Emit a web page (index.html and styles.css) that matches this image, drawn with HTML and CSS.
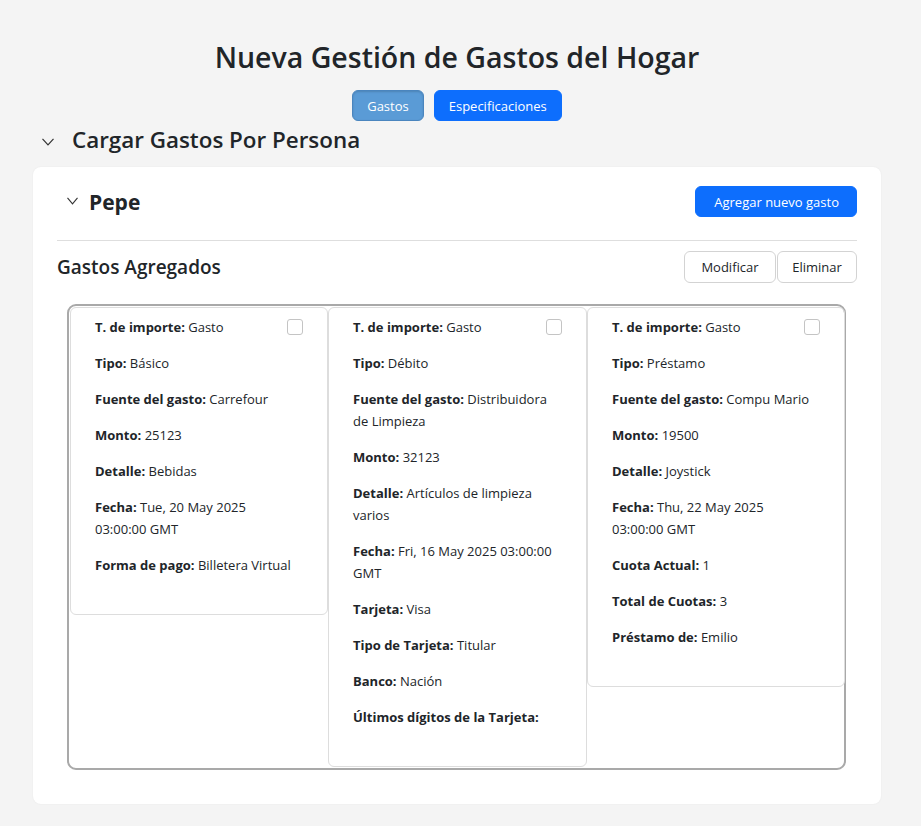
FILE: index.html
```html
<!DOCTYPE html>
<html lang="es">
<head>
<meta charset="utf-8">
<title>Nueva Gestión de Gastos del Hogar</title>
<link rel="stylesheet" href="styles.css">
</head>
<body>
<div class="page">
  <h1 class="title">Nueva Gestión de Gastos del Hogar</h1>
  <nav class="tabs">
    <button class="btn btn-tab active">Gastos</button>
    <button class="btn btn-tab">Especificaciones</button>
  </nav>
  <div class="section-head">
    <svg class="chev chev-lg" viewBox="0 0 12 8" width="12" height="8"><polyline points="0.5,0.8 6,6.8 11.5,0.8" fill="none" stroke="#333" stroke-width="1.2"/></svg>
    <h2 class="section-title">Cargar Gastos Por Persona</h2>
  </div>
  <section class="panel">
    <div class="person-row">
      <div class="person-name">
        <svg class="chev chev-sm" viewBox="0 0 11 8" width="11" height="8"><polyline points="0.5,0.8 5.5,6.8 10.5,0.8" fill="none" stroke="#333" stroke-width="1.1"/></svg>
        <h3 class="person-title">Pepe</h3>
      </div>
      <button class="btn btn-primary">Agregar nuevo gasto</button>
    </div>
    <hr class="divider">
    <div class="list-head">
      <h4 class="list-title">Gastos Agregados</h4>
      <div class="actions">
        <button class="btn btn-light btn-mod">Modificar</button>
        <button class="btn btn-light btn-del">Eliminar</button>
      </div>
    </div>
    <div class="grid">
      <article class="card">
        <div class="row-first"><p><b>T. de importe:</b> Gasto</p><span class="check"></span></div>
        <p><b>Tipo:</b> Básico</p>
        <p><b>Fuente del gasto:</b> Carrefour</p>
        <p><b>Monto:</b> 25123</p>
        <p><b>Detalle:</b> Bebidas</p>
        <p><b>Fecha:</b> Tue, 20 May 2025 03:00:00 GMT</p>
        <p><b>Forma de pago:</b> Billetera Virtual</p>
      </article>
      <article class="card">
        <div class="row-first"><p><b>T. de importe:</b> Gasto</p><span class="check"></span></div>
        <p><b>Tipo:</b> Débito</p>
        <p><b>Fuente del gasto:</b> Distribuidora de Limpieza</p>
        <p><b>Monto:</b> 32123</p>
        <p><b>Detalle:</b> Artículos de limpieza varios</p>
        <p><b>Fecha:</b> Fri, 16 May 2025 03:00:00 GMT</p>
        <p><b>Tarjeta:</b> Visa</p>
        <p><b>Tipo de Tarjeta:</b> Titular</p>
        <p><b>Banco:</b> Nación</p>
        <p><b>Últimos dígitos de la Tarjeta:</b></p>
      </article>
      <article class="card">
        <div class="row-first"><p><b>T. de importe:</b> Gasto</p><span class="check"></span></div>
        <p><b>Tipo:</b> Préstamo</p>
        <p><b>Fuente del gasto:</b> Compu Mario</p>
        <p><b>Monto:</b> 19500</p>
        <p><b>Detalle:</b> Joystick</p>
        <p><b>Fecha:</b> Thu, 22 May 2025 03:00:00 GMT</p>
        <p><b>Cuota Actual:</b> 1</p>
        <p><b>Total de Cuotas:</b> 3</p>
        <p><b>Préstamo de:</b> Emilio</p>
      </article>
    </div>
  </section>
</div>
</body>
</html>
```
FILE: styles.css
```css
* { box-sizing: border-box; }
html, body { margin: 0; padding: 0; }
body {
  background: #f4f4f4;
  color: #212529;
  font-family: "Open Sans", "Noto Sans", "Liberation Sans", sans-serif;
  font-size: 14px;
}
.page {
  padding: 38px 40px 20px 33px;
}
.title {
  margin: 0;
  text-align: center;
  font-size: 28.5px;
  font-weight: 600;
  line-height: 38px;
}
.tabs {
  display: flex;
  justify-content: center;
  gap: 10px;
  margin-top: 14px;
}
.btn {
  font-family: inherit;
  font-size: 13px;
  line-height: 20px;
  border-radius: 6px;
  cursor: pointer;
}
.btn-tab {
  height: 31px;
  padding: 0 14px;
  background: #0d6efd;
  color: #fff;
  border: 1px solid #0d6efd;
}
.btn-tab.active {
  background: #5a9bd6;
  border: 1px solid #4a85be;
  box-shadow: inset 0 1px 2px rgba(0,0,0,0.15);
}
.section-head {
  display: flex;
  align-items: center;
  margin-top: 5px;
  padding-left: 9px;
  height: 28px;
}
.chev-lg { margin-right: 18px; margin-top: 4px; }
.section-title {
  margin: 0;
  font-size: 22.4px;
  font-weight: 600;
  line-height: 28px;
}
.panel {
  margin-top: 13px;
  background: #fff;
  border-radius: 8px;
  padding: 19px 24px 34px;
  box-shadow: 0 0 2px rgba(0,0,0,0.06);
}
.person-row {
  display: flex;
  align-items: center;
  justify-content: space-between;
  height: 31px;
}
.person-name {
  display: flex;
  align-items: center;
  padding-left: 10px;
}
.chev-sm { margin-right: 11px; margin-top: -2px; }
.person-title {
  margin: 0;
  font-size: 21px;
  font-weight: 700;
  line-height: 28px;
}
.btn-primary {
  height: 31px;
  padding: 0 17px 0 18px;
  background: #0d6efd;
  color: #fff;
  border: 1px solid #0d6efd;
}
.divider {
  margin: 23px 0 10px;
  border: 0;
  border-top: 1px solid #dedede;
}
.list-head {
  display: flex;
  align-items: center;
  justify-content: space-between;
  height: 32px;
}
.list-title {
  margin: 0;
  font-size: 19px;
  font-weight: 600;
}
.actions { display: flex; gap: 1px; }
.btn-light {
  height: 32px;
  background: #fff;
  color: #212529;
  border: 1px solid #d3d3d3;
}
.btn-mod { padding: 0 16px; width: 92px; }
.btn-del { padding: 0 14px; width: 80px; }
.grid {
  margin: 21px 11px 0 10px;
  border: 2px solid #a9a9a9;
  border-radius: 9px;
  padding: 1px 0 1px 1px;
  display: grid;
  grid-template-columns: 258px 259px 258px;
  align-items: start;
}
.card {
  border: 1px solid #dddddd;
  border-radius: 6px;
  padding: 8px 29px 24px 24px;
  font-size: 13px;
}
.card p {
  margin: 0 0 14px;
  line-height: 22px;
}
.card b { font-weight: 700; }
.row-first {
  display: flex;
  align-items: center;
  justify-content: space-between;
  margin-bottom: 14px;
}
.row-first p { margin: 0; }
.check {
  flex: none;
  width: 16px;
  height: 16px;
  margin-right: -5px;
  border: 1px solid #c4c4c4;
  border-radius: 3px;
  background: #fff;
}
```
